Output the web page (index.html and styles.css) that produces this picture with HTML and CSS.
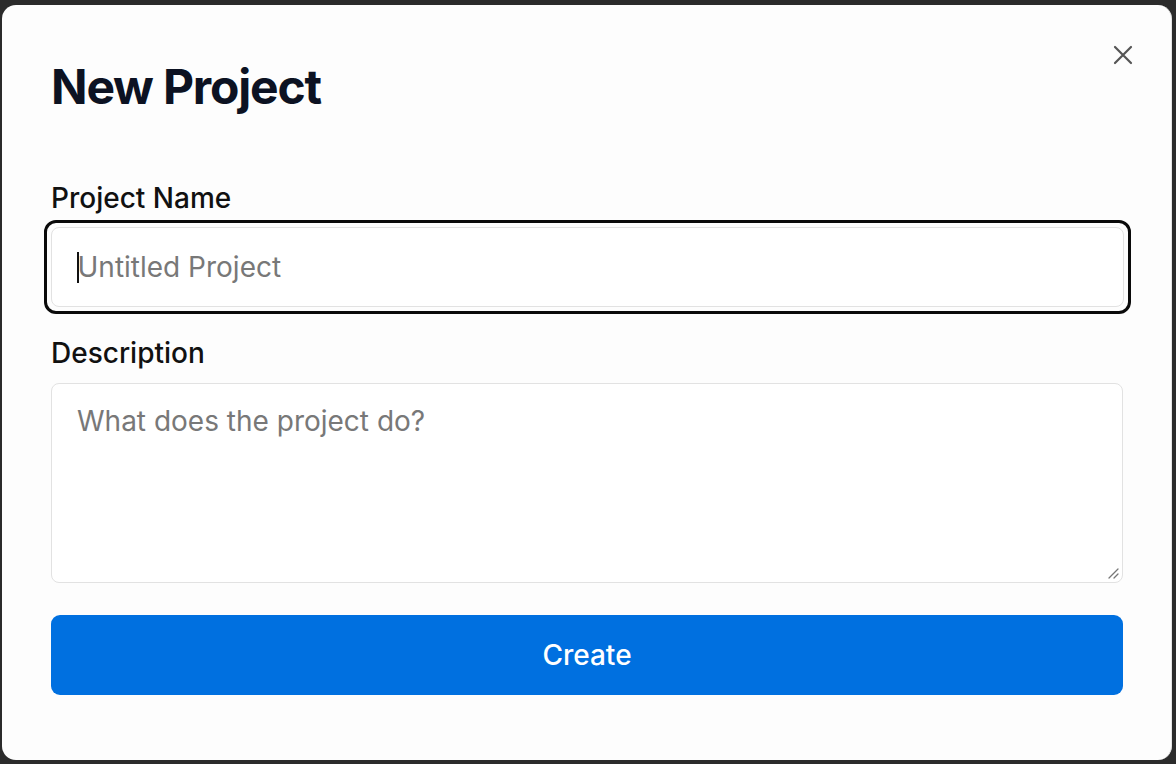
FILE: index.html
```html
<!DOCTYPE html>
<html lang="en">
<head>
<meta charset="utf-8">
<title>New Project</title>
<link rel="stylesheet" href="styles.css">
</head>
<body>
<div class="backdrop">
  <div class="dialog">
    <button class="close" aria-label="Close">
      <svg width="20" height="20" viewBox="0 0 20 20" fill="none" stroke="#555" stroke-width="2.2" stroke-linecap="round">
        <path d="M2 2 L18 18 M18 2 L2 18"/>
      </svg>
    </button>
    <h1 class="title">New Project</h1>
    <form class="form">
      <label class="label" for="name">Project Name</label>
      <div class="field-ring">
        <div class="input"><span class="caret"></span><span class="placeholder">Untitled Project</span></div>
      </div>
      <label class="label label-desc" for="desc">Description</label>
      <div class="textarea">
        <span class="placeholder">What does the project do?</span>
        <svg class="resize" width="12" height="12" viewBox="0 0 12 12" stroke="#777" stroke-width="1.3" stroke-linecap="round">
          <path d="M2 11 L11 2 M7 11 L11 7"/>
        </svg>
      </div>
      <button type="button" class="create">Create</button>
    </form>
  </div>
</div>
</body>
</html>
```

FILE: styles.css
```css
html, body {
  margin: 0;
  padding: 0;
  background: #2b2b2b;
  height: 100%;
  overflow: hidden;
}
.backdrop {
  padding: 5px 4px 4px 2px;
  height: 764px;
  box-sizing: border-box;
}
.dialog {
  position: relative;
  background: #fdfdfd;
  border-right: 1px solid #e4e4e4;
  border-radius: 14px;
  height: 755px;
  box-sizing: border-box;
  padding: 53px 48px 0 49px;
  font-family: Inter, "Noto Sans", sans-serif;
  color: #111;
}
.close {
  position: absolute;
  top: 40px;
  right: 38px;
  width: 20px;
  height: 20px;
  padding: 0;
  border: none;
  background: none;
  display: flex;
}
.title {
  margin: 0;
  font-size: 48px;
  font-weight: 700;
  letter-spacing: -0.025em;
  line-height: 58px;
  color: #0c1222;
}
.form {
  display: flex;
  flex-direction: column;
  margin-top: 68px;
}
.label {
  font-size: 28px;
  font-weight: 500;
  line-height: 29px;
  color: #111;
  margin-bottom: 14px;
}
.label-desc {
  margin-top: 32px;
  margin-bottom: 15px;
}
.field-ring {
  border: 3px solid #0a0a0a;
  border-radius: 12px;
  margin: -7px -8px -7px -7px;
  padding: 4px;
}
.input {
  height: 80px;
  box-sizing: border-box;
  border: 1px solid #e2e2e2;
  border-radius: 8px;
  background: #fff;
  display: flex;
  align-items: center;
  padding-left: 25px;
}
.caret {
  width: 1.5px;
  height: 31px;
  background: #111;
  margin-right: -1px;
}
.placeholder {
  font-size: 28px;
  line-height: 29px;
  color: #787878;
}
.textarea {
  position: relative;
  height: 200px;
  box-sizing: border-box;
  border: 1px solid #e2e2e2;
  border-radius: 8px;
  background: #fff;
  padding: 23px 25px;
}
.textarea .placeholder {
  display: block;
}
.resize {
  position: absolute;
  right: 3px;
  bottom: 3px;
}
.create {
  margin-top: 32px;
  height: 80px;
  border: none;
  border-radius: 9px;
  background: #0070e0;
  color: #fff;
  font-family: Inter, "Noto Sans", sans-serif;
  font-size: 28px;
  font-weight: 500;
}
```
